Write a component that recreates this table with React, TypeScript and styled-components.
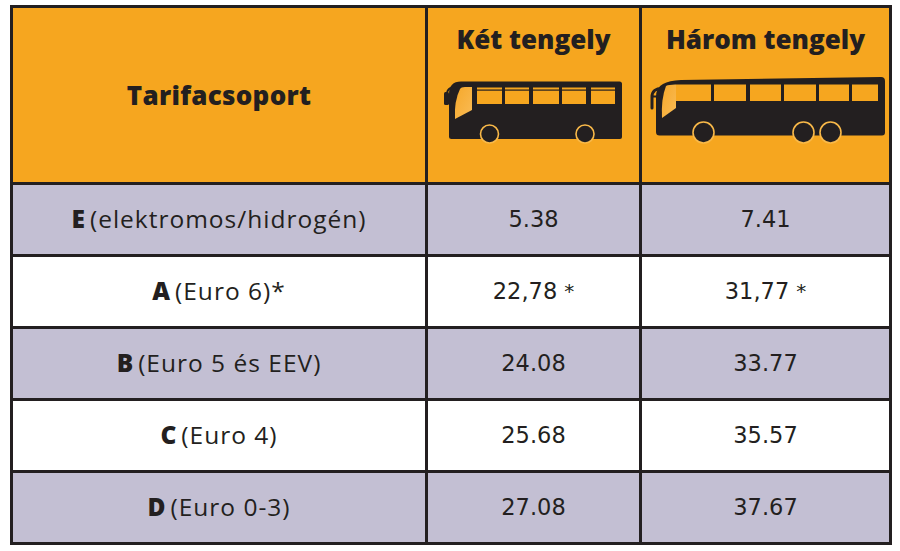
import React from "react";
import styled, { createGlobalStyle } from "styled-components";

const Global = createGlobalStyle`
  html, body { margin: 0; padding: 0; background: #ffffff; }
  body { font-family: "Open Sans", "Noto Sans", "DejaVu Sans", sans-serif; color: #231f20; }
`;

const ORANGE = "#f6a61f";
const LAVENDER = "#c3bfd3";
const INK = "#231f20";

const Page = styled.div`
  padding: 5px 0 0 10px;
`;

const Table = styled.div`
  display: grid;
  width: 882px;
  box-sizing: border-box;
  grid-template-columns: 412px 211px 247px;
  grid-template-rows: 174px repeat(5, 69px);
  gap: 3px;
  padding: 3px;
  background: ${INK};
`;

const HeadCell = styled.div<{ $top?: boolean }>`
  background: ${ORANGE};
  display: flex;
  flex-direction: column;
  align-items: center;
  justify-content: ${(p) => (p.$top ? "flex-start" : "center")};
  padding-top: ${(p) => (p.$top ? "16px" : "0")};
  box-sizing: border-box;
`;

const HeadText = styled.div<{ $ls: number }>`
  font-weight: 800;
  font-size: 26px;
  line-height: 30px;
  letter-spacing: ${(p) => p.$ls}px;
  white-space: nowrap;
`;

const BusWrap = styled.div<{ $dx: number; $mt: number }>`
  margin-top: ${(p) => p.$mt}px;
  margin-left: ${(p) => p.$dx}px;
  display: flex;
`;

const Cell = styled.div<{ $shade: boolean; $num?: boolean }>`
  background: ${(p) => (p.$shade ? LAVENDER : "#ffffff")};
  display: flex;
  align-items: center;
  justify-content: center;
  font-family: ${(p) => (p.$num ? '"DejaVu Sans", Verdana, sans-serif' : '"Open Sans", "Noto Sans", sans-serif')};
  font-size: ${(p) => (p.$num ? "22.5px" : "24.5px")};
  line-height: 28px;
  letter-spacing: ${(p) => (p.$num ? "0" : "1px")};
  white-space: nowrap;
  padding-bottom: 2px;
  box-sizing: border-box;
`;

const Code = styled.span`
  font-weight: 800;
  margin-right: 4px;
`;

const Star = styled.span`
  margin-left: 7px;
  font-size: 20px;
  align-self: flex-start;
  margin-top: 20px;
`;

const BusTwo = () => (
  <svg width="180" height="66" viewBox="0 0 180 66">
    <defs>
      <linearGradient id="ws" x1="0" y1="0" x2="1" y2="1">
        <stop offset="0" stopColor="#f6a82a" />
        <stop offset="1" stopColor="#f9bb55" />
      </linearGradient>
    </defs>
    <rect x="0" y="12" width="5" height="13" rx="1.5" fill={INK} />
    <path d="M3,13 Q4,8 8,8" stroke={INK} strokeWidth="2" fill="none" />
    <path
      d="M5,14 Q5,1.5 17,1.5 L175.5,1.5 Q178,1.5 178,4 L178,57 Q178,59 176,59 L7.5,59 Q5,59 5,56.5 Z"
      fill={INK}
    />
    <path d="M16,9 Q17,7 21,7 L28,7 L28,30 L11,39 Q10,21 16,9 Z" fill="url(#ws)" />
    {[
      [33, 25],
      [61, 24],
      [89, 26],
      [118, 24],
      [147, 24],
    ].map(([x, w]) => (
      <rect key={x} x={x} y="7.5" width={w} height="16.5" fill={ORANGE} />
    ))}
    <rect x="31" y="9.5" width="142" height="1.2" fill={INK} />
    <circle cx="45.5" cy="54" r="9" fill={INK} stroke="#f9b949" strokeWidth="1.6" />
    <circle cx="141" cy="54" r="9" fill={INK} stroke="#f9b949" strokeWidth="1.6" />
  </svg>
);

const BusThree = () => (
  <svg width="238" height="70" viewBox="0 0 238 70">
    <defs>
      <linearGradient id="ws3" x1="0" y1="0" x2="1" y2="1">
        <stop offset="0" stopColor="#f6a82a" />
        <stop offset="1" stopColor="#f9bb55" />
      </linearGradient>
    </defs>
    <path
      d="M14,9 Q20,5.5 32,5 L232,2 Q236,2 236,6 L236,57.5 Q236,60.5 233,60.5 L10.5,60.5 Q7,60.5 7,57 L7,22 Q7,12.5 14,9 Z"
      fill={INK}
    />
    <path d="M14,13.5 Q3,13 3,22 L3,33" stroke={INK} strokeWidth="3" fill="none" strokeLinecap="round" />
    <path d="M4,21.5 L12,21.5" stroke={INK} strokeWidth="2" />
    <path d="M17,11 Q20,9.5 26,9.5 L27,9.5 L27,33 L13,43 Q12,24 17,11 Z" fill="url(#ws3)" />
    {[
      [27, 35],
      [65, 32],
      [101, 31],
      [135, 32],
      [170, 30],
      [203, 26],
    ].map(([x, w]) => (
      <rect key={x} x={x} y="9.5" width={w} height="16.5" fill={ORANGE} />
    ))}
    <circle cx="54.5" cy="57.5" r="10.5" fill={INK} stroke="#f9b949" strokeWidth="1.6" />
    <circle cx="154.5" cy="57.5" r="10.5" fill={INK} stroke="#f9b949" strokeWidth="1.6" />
    <circle cx="181.5" cy="57.5" r="10.5" fill={INK} stroke="#f9b949" strokeWidth="1.6" />
  </svg>
);

type Row = { code: string; label: string; two: string; three: string; star?: boolean };

const rows: Row[] = [
  { code: "E", label: "(elektromos/hidrogén)", two: "5.38", three: "7.41" },
  { code: "A", label: "(Euro 6)*", two: "22,78", three: "31,77", star: true },
  { code: "B", label: "(Euro 5 és EEV)", two: "24.08", three: "33.77" },
  { code: "C", label: "(Euro 4)", two: "25.68", three: "35.57" },
  { code: "D", label: "(Euro 0-3)", two: "27.08", three: "37.67" },
];

export default function App() {
  return (
    <>
      <Global />
      <Page>
        <Table>
          <HeadCell>
            <HeadText $ls={0.3}>Tarifacsoport</HeadText>
          </HeadCell>
          <HeadCell $top>
            <HeadText $ls={0}>Két tengely</HeadText>
            <BusWrap $dx={0} $mt={26}>
              <BusTwo />
            </BusWrap>
          </HeadCell>
          <HeadCell $top>
            <HeadText $ls={0}>Három tengely</HeadText>
            <BusWrap $dx={4} $mt={21}>
              <BusThree />
            </BusWrap>
          </HeadCell>
          {rows.map((r, i) => (
            <React.Fragment key={r.code}>
              <Cell $shade={i % 2 === 0}>
                <Code>{r.code}</Code>
                {r.label}
              </Cell>
              <Cell $shade={i % 2 === 0} $num>
                {r.two}
                {r.star && <Star>*</Star>}
              </Cell>
              <Cell $shade={i % 2 === 0} $num>
                {r.three}
                {r.star && <Star>*</Star>}
              </Cell>
            </React.Fragment>
          ))}
        </Table>
      </Page>
    </>
  );
}
